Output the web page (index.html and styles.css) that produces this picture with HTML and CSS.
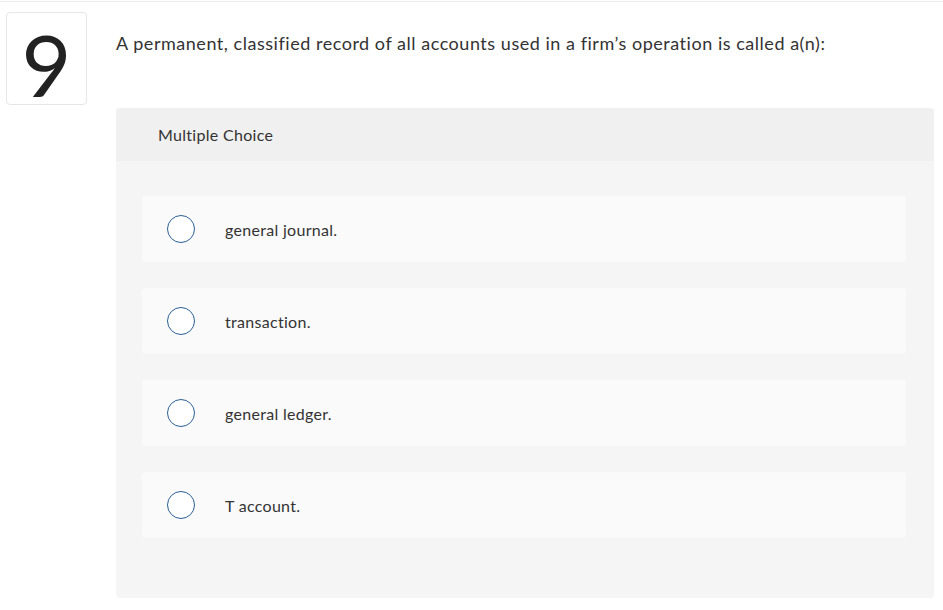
FILE: index.html
```html
<!DOCTYPE html>
<html lang="en">
<head>
<meta charset="utf-8">
<title>Question 9</title>
<link rel="stylesheet" href="styles.css">
</head>
<body>
<div class="topline"></div>
<div class="page">
  <div class="numbox"><span class="num">9</span></div>
  <div class="content">
    <p class="question">A permanent, classified record of all accounts used in a firm’s operation is called a(n):</p>
    <div class="panel">
      <div class="panel-head">Multiple Choice</div>
      <div class="options">
        <div class="option"><span class="radio"></span><span class="label">general journal.</span></div>
        <div class="option"><span class="radio"></span><span class="label">transaction.</span></div>
        <div class="option"><span class="radio"></span><span class="label">general ledger.</span></div>
        <div class="option"><span class="radio"></span><span class="label">T account.</span></div>
      </div>
    </div>
  </div>
</div>
</body>
</html>
```
FILE: styles.css
```css
html, body {
  margin: 0;
  padding: 0;
  background: #ffffff;
}
body {
  font-family: Lato, "Liberation Sans", sans-serif;
  color: #333333;
}
.topline {
  margin-top: 1px;
  height: 1px;
  background: #ebebeb;
}
.page {
  display: flex;
  align-items: flex-start;
  padding: 10px 0 0 6px;
}
.numbox {
  width: 81px;
  height: 93px;
  border: 1px solid #e6e6e6;
  border-radius: 4px;
  box-sizing: border-box;
  display: flex;
  align-items: center;
  justify-content: center;
  flex-shrink: 0;
}
.num {
  font-size: 86px;
  line-height: 1;
  color: #222222;
  font-weight: 400;
  margin-top: 10px;
}
.content {
  margin-left: 29px;
  width: 818px;
}
.question {
  margin: 0;
  padding-top: 19px;
  height: 96px;
  box-sizing: border-box;
  font-size: 18px;
  line-height: 24px;
  letter-spacing: 0.53px;
  color: #333333;
}
.panel {
  background: #f5f5f5;
  border-radius: 4px;
}
.panel-head {
  height: 53px;
  background: #f0f0f0;
  border-radius: 4px 4px 0 0;
  display: flex;
  align-items: center;
  padding-left: 42px;
  font-size: 16px;
  letter-spacing: 0.3px;
  color: #333333;
}
.options {
  display: flex;
  flex-direction: column;
  gap: 26px;
  padding: 35px 28px 60px 26px;
}
.option {
  height: 66px;
  background: #fafafa;
  border-radius: 4px;
  display: flex;
  align-items: center;
  padding-left: 25px;
}
.radio {
  width: 28px;
  height: 28px;
  box-sizing: border-box;
  border: 1.5px solid #2b5f97;
  border-radius: 50%;
  background: #ffffff;
  flex-shrink: 0;
}
.label {
  margin-left: 30px;
  font-size: 16px;
  letter-spacing: 0.3px;
  color: #333333;
}
```
